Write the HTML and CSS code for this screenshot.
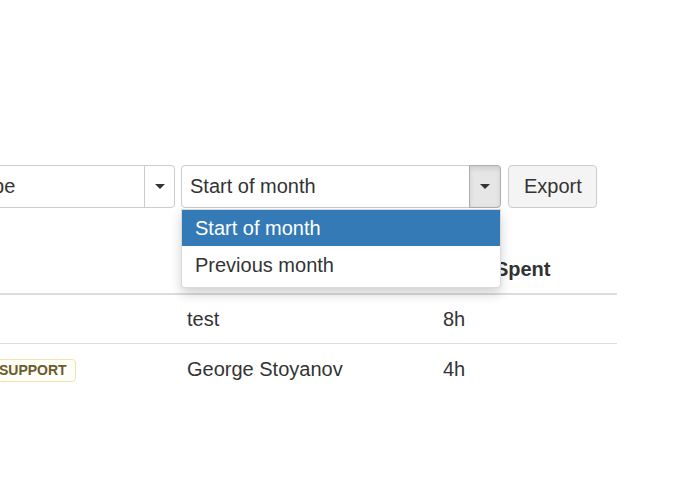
FILE: index.html
```html
<!DOCTYPE html>
<html>
<head>
<meta charset="utf-8">
<link rel="stylesheet" href="styles.css">
</head>
<body>
<div class="page">
  <div class="toolbar">
    <div class="select select-type">
      <span class="select-text">Type</span>
      <span class="select-arrow"><span class="caret"></span></span>
    </div>
    <div class="select select-period">
      <span class="select-text">Start of month</span>
      <span class="select-arrow active"><span class="caret"></span></span>
      <ul class="dropdown">
        <li class="dropdown-item selected">Start of month</li>
        <li class="dropdown-item">Previous month</li>
      </ul>
    </div>
    <button class="btn">Export</button>
  </div>
  <table class="report">
    <colgroup>
      <col class="col-task">
      <col class="col-user">
      <col class="col-time">
    </colgroup>
    <thead>
      <tr><th></th><th>User</th><th>Time Spent</th></tr>
    </thead>
    <tbody>
      <tr><td></td><td>test</td><td>8h</td></tr>
      <tr><td><span class="badge">SUPPORT</span></td><td>George Stoyanov</td><td>4h</td></tr>
    </tbody>
  </table>
</div>
</body>
</html>
```
FILE: styles.css
```css
html, body {
  margin: 0;
  padding: 0;
  background: #fff;
}
body {
  font-family: "Liberation Sans", Arial, sans-serif;
  font-size: 20px;
  color: #333;
  overflow: hidden;
}
.page {
  padding-top: 165px;
}
.toolbar {
  display: flex;
  align-items: flex-start;
  margin-left: -41px;
}
.select {
  position: relative;
  display: flex;
  height: 43px;
  box-sizing: border-box;
  border: 1px solid #ccc;
  border-radius: 4px;
  background: #fff;
}
.select-type {
  width: 216px;
  margin-right: 6px;
}
.select-period {
  width: 320px;
  margin-right: 7px;
}
.select-text {
  flex: 1;
  padding-left: 8px;
  line-height: 41px;
  white-space: nowrap;
  overflow: hidden;
}
.select-type .select-text {
  padding-left: 12px;
}
.select-arrow {
  width: 29px;
  border-left: 1px solid #ccc;
  display: flex;
  align-items: center;
  justify-content: center;
  border-radius: 0 3px 3px 0;
}
.select-arrow.active {
  width: 30px;
  background: #e6e6e6;
  border: 1px solid #adadad;
  margin: -1px -1px -1px 0;
  border-radius: 0 4px 4px 0;
  box-shadow: inset 0 3px 5px rgba(0, 0, 0, 0.1);
}
.caret {
  width: 0;
  height: 0;
  border-top: 5px solid #333;
  border-left: 5px solid transparent;
  border-right: 5px solid transparent;
}
.dropdown {
  position: absolute;
  top: 100%;
  left: -1px;
  right: -1px;
  margin: 2px 0 0;
  padding: 0 0 3px;
  list-style: none;
  background: #fff;
  border: 1px solid rgba(0, 0, 0, 0.15);
  border-radius: 0 0 4px 4px;
  box-shadow: 0 6px 12px rgba(0, 0, 0, 0.175);
  z-index: 10;
}
.dropdown-item {
  padding: 1px 13px 0;
  height: 38px;
  box-sizing: border-box;
  line-height: 37px;
  white-space: nowrap;
}
.dropdown-item.selected {
  height: 36px;
  line-height: 35px;
  background: #337ab7;
  color: #fff;
}
.btn {
  height: 43px;
  box-sizing: border-box;
  padding: 0 14px 0 15px;
  font-family: inherit;
  font-size: 20px;
  color: #333;
  background: #f4f4f4;
  border: 1px solid #ccc;
  border-radius: 4px;
}
.report {
  margin-top: 37px;
  margin-left: -21px;
  width: 638px;
  border-collapse: collapse;
  table-layout: fixed;
}
.col-task { width: 197px; }
.col-user { width: 256px; }
.col-time { width: 185px; }
.report th,
.report td {
  padding: 10px 11px;
  line-height: 28px;
  text-align: left;
  vertical-align: middle;
  white-space: nowrap;
}
.report th {
  font-weight: bold;
  border-bottom: 2px solid #ddd;
}
.report td {
  border-bottom: 1px solid #ddd;
}
.report tbody tr:last-child td {
  padding-top: 11px;
  border-bottom: none;
}
.badge {
  display: inline-block;
  padding: 3px 8px;
  font-size: 14px;
  line-height: 15px;
  font-weight: bold;
  color: #6b5a2b;
  background: #fffef8;
  border: 1px solid #f5e3ac;
  border-radius: 4px;
  vertical-align: middle;
}
```
